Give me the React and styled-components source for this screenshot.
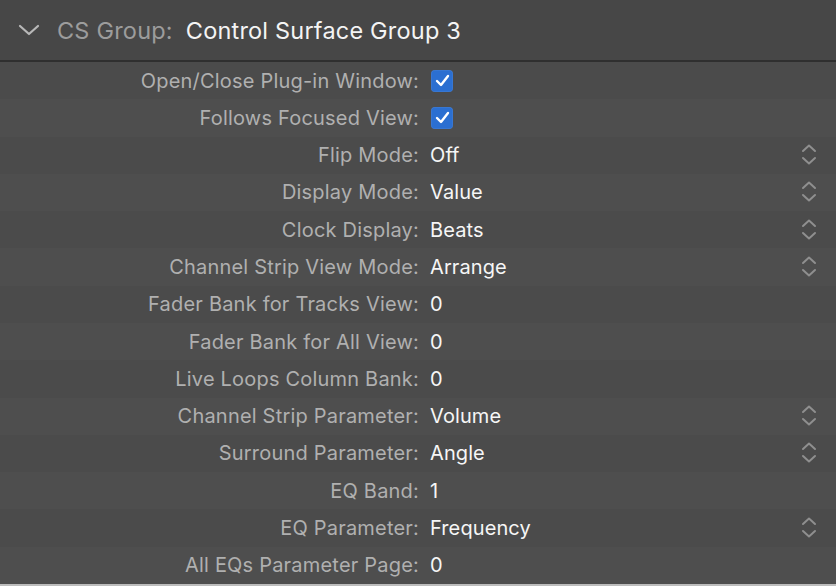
import React from "react";
import styled, { createGlobalStyle } from "styled-components";

const Global = createGlobalStyle`
  html, body { margin: 0; padding: 0; background: #4b4b4b; }
  body { font-family: Inter, "Noto Sans", "Liberation Sans", sans-serif; -webkit-font-smoothing: antialiased; }
`;

const Panel = styled.div`
  width: 836px;
  height: 586px;
  display: flex;
  flex-direction: column;
  background: #4b4b4b;
  overflow: hidden;
`;

const Header = styled.div`
  height: 60px;
  flex: none;
  display: flex;
  align-items: center;
  background: #474747;
  border-bottom: 2px solid #2f2f2f;
  padding-left: 18px;
`;

const HeaderLabel = styled.span`
  color: #9c9c9c;
  font-size: 23.5px;
  margin-left: 17px;
  letter-spacing: 0.2px;
`;

const HeaderValue = styled.span`
  color: #f4f4f4;
  font-size: 23.5px;
  margin-left: 13px;
  letter-spacing: 0.2px;
`;

const Rows = styled.div`
  display: flex;
  flex-direction: column;
  flex: 1;
`;

const Row = styled.div`
  height: 37.29px;
  flex: none;
  display: grid;
  grid-template-columns: 419px 1fr 36px;
  align-items: center;
  background: ${(p) => (p.$alt ? "#4e4e4e" : "#4b4b4b")};
`;

const Label = styled.span`
  text-align: right;
  color: #b0b0b0;
  font-size: 20px;
  letter-spacing: 0.2px;
  white-space: nowrap;
`;

const Value = styled.span`
  color: #f6f6f6;
  font-size: 20px;
  letter-spacing: 0.1px;
  padding-left: 11px;
  white-space: nowrap;
  display: flex;
  align-items: center;
`;

const Check = styled.span`
  width: 22px;
  height: 22px;
  margin-left: 1px;
  border-radius: 4px;
  background: #2b6fd1;
  box-shadow: inset 0 0 0 0.5px rgba(255,255,255,0.12);
  display: inline-flex;
  align-items: center;
  justify-content: center;
`;

const Stepper = styled.span`
  display: flex;
  justify-content: flex-start;
`;

const BottomLine = styled.div`
  height: 2px;
  flex: none;
  background: #bdbdbd;
`;

const Chevron = () => (
  <svg width="22" height="14" viewBox="0 0 22 14">
    <path d="M2 3 L11 11 L20 3" fill="none" stroke="#b8b8b8" strokeWidth="2.2" strokeLinecap="round" strokeLinejoin="round" />
  </svg>
);

const CheckMark = () => (
  <svg width="15" height="13" viewBox="0 0 15 13">
    <path d="M2 7 L6 11 L13 2" fill="none" stroke="#ffffff" strokeWidth="2.4" strokeLinecap="round" strokeLinejoin="round" />
  </svg>
);

const UpDown = () => (
  <svg width="18" height="24" viewBox="0 0 18 24">
    <path d="M3 8 L9 2.5 L15 8" fill="none" stroke="#8f8f8f" strokeWidth="2" strokeLinecap="round" strokeLinejoin="round" />
    <path d="M3 15 L9 20.5 L15 15" fill="none" stroke="#8f8f8f" strokeWidth="2" strokeLinecap="round" strokeLinejoin="round" />
  </svg>
);

const rows = [
  { label: "Open/Close Plug-in Window:", check: true },
  { label: "Follows Focused View:", check: true },
  { label: "Flip Mode:", value: "Off", menu: true },
  { label: "Display Mode:", value: "Value", menu: true },
  { label: "Clock Display:", value: "Beats", menu: true },
  { label: "Channel Strip View Mode:", value: "Arrange", menu: true },
  { label: "Fader Bank for Tracks View:", value: "0" },
  { label: "Fader Bank for All View:", value: "0" },
  { label: "Live Loops Column Bank:", value: "0" },
  { label: "Channel Strip Parameter:", value: "Volume", menu: true },
  { label: "Surround Parameter:", value: "Angle", menu: true },
  { label: "EQ Band:", value: "1" },
  { label: "EQ Parameter:", value: "Frequency", menu: true },
  { label: "All EQs Parameter Page:", value: "0" },
];

export default function App() {
  return (
    <>
      <Global />
      <Panel>
        <Header>
          <Chevron />
          <HeaderLabel>CS Group:</HeaderLabel>
          <HeaderValue>Control Surface Group 3</HeaderValue>
        </Header>
        <Rows>
          {rows.map((r, i) => (
            <Row key={i} $alt={i % 2 === 1}>
              <Label>{r.label}</Label>
              <Value>
                {r.check ? (
                  <Check>
                    <CheckMark />
                  </Check>
                ) : (
                  r.value
                )}
              </Value>
              <Stepper>{r.menu ? <UpDown /> : null}</Stepper>
            </Row>
          ))}
        </Rows>
        <BottomLine />
      </Panel>
    </>
  );
}
